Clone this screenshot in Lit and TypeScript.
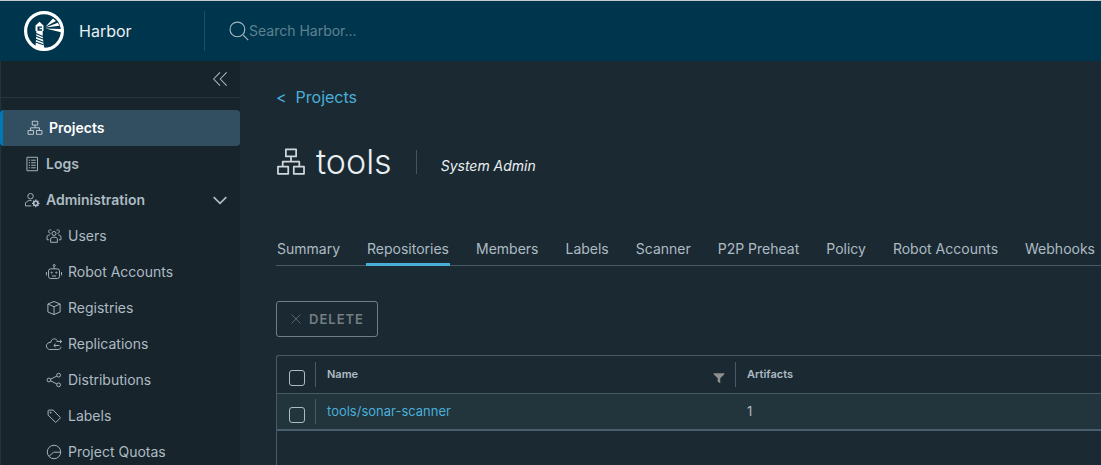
import { LitElement, html, css, svg, nothing } from "lit";
import { customElement, property, state } from "lit/decorators.js";

const icons: Record<string, unknown> = {
  organization: svg`<rect x="11.500" y="2" width="13" height="9"/><path d="M18 11v6M7.500 24v-6.500h21V24"/><rect x="1.500" y="24" width="13" height="9"/><rect x="21.500" y="24" width="13" height="9"/>`,
  list: svg`<rect x="6" y="2" width="25" height="32"/><path d="M10.500 9h3M16 9h11M10.500 15h3M16 15h11M10.500 21h3M16 21h11M10.500 27h3M16 27h11"/>`,
  admin: svg`<circle cx="14.500" cy="9" r="6.500"/><path d="M17 19.500c-6-1-11.500 1-14.500 5.500v7h14"/><circle cx="27" cy="26" r="5" stroke-width="4"/><path d="M27 17v4M27 31v4M18 26h4M32 26h4M20.700 19.700l2.800 2.800M30.500 29.500l2.800 2.800M33.300 19.700l-2.800 2.800M23.500 29.500l-2.800 2.800" stroke-width="3"/>`,
  users: svg`<circle cx="18" cy="12" r="4.800"/><path d="M10 33v-9c2-4.500 14-4.500 16 0v9z"/><path d="M12 4.500C9 1.500 4.500 4 5.500 8c.4 2.500 2.500 4 4.500 4M24 4.500c3-3 7.500-.5 6.500 3.500-.4 2.500-2.500 4-4.500 4M8 15.500c-3 0-5 1-6.500 3V27h4.500M28 15.500c3 0 5 1 6.500 3V27H30"/>`,
  robot: svg`<rect x="5" y="10.500" width="26" height="23" rx="5"/><circle cx="18.500" cy="2.500" r="2.300"/><path d="M18 5v5.500M0 18v8M36 18v8M13 27.500h10"/><circle cx="12.500" cy="19.500" r="1.400"/><circle cx="23.500" cy="19.500" r="1.400"/>`,
  block: svg`<path d="M18 2.500l14.500 6v19L18 33.500l-14.500-6v-19zM3.500 8.500L18 15l14.500-6.500M18 15v18.500"/>`,
  cloud: svg`<path d="M26 10C22 3 11 5 10.500 14 4 14 0 18 0 22.500S3.500 31 8 31h20c4 0 6.500-3 6.500-6.500"/><path d="M36 12H24M32 8l4.500 4-4.500 4M18 21.500h13M22 17.500l-4.500 4 4.500 4"/>`,
  share: svg`<circle cx="6" cy="18" r="4.500"/><circle cx="29" cy="6.500" r="4.500"/><circle cx="29" cy="29.500" r="4.500"/><path d="M10 16l15-7.500M10 20l15 7.500"/>`,
  tag: svg`<path d="M4 5.500C4 4.500 4.500 4 5.500 4H16l16.500 17c.7.700.7 1.500 0 2.200l-9.300 9.300c-.7.700-1.500.7-2.200 0L4 16z"/><circle cx="10" cy="10" r="1.300"/>`,
  quota: svg`<circle cx="18" cy="18" r="16"/><path d="M6 28.500l11-10h17"/>`,
  collapse: svg`<path d="M18 4L4.500 18 18 32M32 4L18.500 18 32 32"/>`,
  down: svg`<path d="M3 11l15 15 15-15"/>`,
  search: svg`<circle cx="15" cy="15" r="14"/><path d="M26 26l9.500 9.500"/>`,
  close: svg`<path d="M4 4l28 28M32 4L4 32"/>`,
  funnel: svg`<path d="M1 3h34v3L22 19v16l-8-5V19L1 6z" fill="currentColor" stroke="none"/>`,
};

@customElement("ui-icon")
export class UiIcon extends LitElement {
  @property() name = "";
  @property({ type: Number }) weight = 2.2;
  static styles = css`
    :host { display: inline-flex; flex: none; width: 16px; height: 16px; }
    svg { width: 100%; height: 100%; overflow: visible; }
  `;
  render() {
    return html`<svg viewBox="-1 -1 38 38" fill="none" stroke="currentColor" stroke-width=${this.weight} stroke-linejoin="round" aria-hidden="true">${icons[this.name]}</svg>`;
  }
}

@customElement("app-root")
export class AppRoot extends LitElement {
  @state() private adminOpen = true;
  @state() private tab = "Repositories";

  private adminItems = [
    ["users", "Users"],
    ["robot", "Robot Accounts"],
    ["block", "Registries"],
    ["cloud", "Replications"],
    ["share", "Distributions"],
    ["tag", "Labels"],
    ["quota", "Project Quotas"],
  ];
  private tabs = ["Summary", "Repositories", "Members", "Labels", "Scanner", "P2P Preheat", "Policy", "Robot Accounts", "Webhooks"];
  private rows = [{ name: "tools/sonar-scanner", artifacts: 1 }];

  static styles = css`
    :host {
      display: flex;
      flex-direction: column;
      height: 100vh;
      overflow: hidden;
      box-sizing: border-box;
      border-top: 1px solid #c4cccd;
      background: #1b2a32;
      color: #adbbc4;
      font: 14px/20px Inter, "Open Sans", sans-serif;
    }
    * { box-sizing: border-box; }
    button { font: inherit; color: inherit; background: none; border: 0; padding: 0; cursor: pointer; }
    a { color: inherit; text-decoration: none; }

    .header { display: flex; align-items: center; flex: none; height: 60px; background: #00364d; padding-left: 24px; }
    .brand { display: flex; align-items: center; gap: 15px; width: 180px; color: #fff; font-size: 16px; }
    .brand-name { color: #eaeff2; }
    .logo { width: 40px; height: 40px; }
    .search { display: flex; align-items: center; flex: 1; height: 40px; padding-left: 24px; border-left: 1px solid #1f4f63; color: #a3b7c0; }
    .search-icon { width: 20px; height: 20px; }
    .search-input { flex: 1; min-width: 0; background: none; border: 0; outline: 0; padding: 0; font: inherit; color: #fff; }
    .search-input::placeholder { color: #5f8190; opacity: 1; }

    .body { display: flex; flex: 1; min-height: 0; }
    .sidebar { flex: none; width: 240px; overflow-y: auto; scrollbar-width: none; background: #17242b; box-shadow: inset 1px 0 #25343c; }
    .collapse-row { display: flex; justify-content: flex-end; align-items: center; height: 37px; padding-right: 11px; margin-bottom: 12px; border-bottom: 1px solid #25343c; }
    .collapse { display: flex; }
    .collapse-icon { width: 18px; height: 18px; }
    .item { display: flex; align-items: center; width: 100%; height: 36px; gap: 6px; padding: 0 12px 0 24px; font-weight: 600; text-align: left; }
    .item.active { background: #324f62; color: #fff; border-left: 3px solid #0079b8; border-radius: 4px; }
    .item.child { padding-left: 46px; font-weight: 400; }
    .item-label { flex: 1; }
    .active ui-icon { color: #c5d0d6; }

    .main { display: flex; flex-direction: column; flex: 1; min-width: 0; padding: 26px 0 0 36px; overflow: hidden; }
    .crumb { display: flex; gap: 9px; align-self: flex-start; color: #49afd9; font-size: 16px; }
    .title { display: flex; align-items: center; height: 40px; margin-top: 35px; color: #eaeff2; }
    .title-icon { width: 30px; height: 30px; margin-right: 10px; color: #d0d8dc; }
    h1 { margin: 0; font-size: 34px; line-height: 40px; font-weight: 300; }
    .role { display: flex; align-items: center; height: 24px; margin-left: 24px; padding: 8px 0 0 24px; border-left: 1px solid #45545e; font-size: 14px; font-style: italic; }
    .tabs { display: flex; gap: 25px; height: 36px; flex: none; margin-top: 48px; box-shadow: inset 0 -1px #495865; }
    .tab { flex: none; height: 36px; padding: 5px 1px 0; white-space: nowrap; border-bottom: 3px solid transparent; }
    .tab.selected { border-bottom-color: #49afd9; }
    .delete { display: flex; align-items: center; justify-content: center; gap: 7px; flex: none; width: 102px; height: 36px; margin: 35px 0 18px; border: 1px solid #737d82; border-radius: 3px; color: #737d82; font-size: 13px; font-weight: 600; letter-spacing: 1px; }
    .delete-icon { width: 12px; height: 12px; }

    .grid { flex: 1; border: 1px solid #495a67; border-right: 0; border-bottom: 0; border-radius: 3px 0 0 0; }
    table { width: 100%; border-collapse: collapse; table-layout: fixed; }
    .col-check { width: 38px; }
    .col-name { width: 420px; }
    th, td { height: 37px; padding: 0; text-align: left; vertical-align: middle; font-weight: 400; }
    th { border-bottom: 1px solid #495a67; font-size: 11px; font-weight: 600; }
    td { background: #22343c; border-bottom: 2px solid #495f6e; font-size: 13px; }
    .cell { display: flex; align-items: center; justify-content: space-between; height: 25px; padding: 0 10px 0 11px; border-left: 1px solid transparent; }
    .divided { border-left-color: #495a67; }
    .check { display: flex; justify-content: center; padding: 7px 0 0 2px; }
    .checkbox { appearance: none; width: 16px; height: 16px; margin: 0; border: 1px solid #adbbc4; border-radius: 3px; }
    .checkbox:checked { background: #49afd9; }
    .link { color: #49afd9; }
    .filter { display: flex; padding-top: 7px; color: #8f8f8f; }
    .filter-icon { width: 12px; height: 12px; }
  `;

  private logo() {
    return html`<svg class="logo" viewBox="0 0 40 40" aria-hidden="true">
      <circle cx="20" cy="20" r="18.400" fill="none" stroke="#fff" stroke-width="3.200"/>
      <path d="M11.500 14.500l4-3.800 4 3.800v5.500h-.8v4l.8 9 1.500 6c-3.500.3-7-.8-9.500-3l.8-12v-4h-.8z" fill="#fff"/>
      <path d="M13.500 15.500h4.500v4.200h-4.500z" fill="#00364d"/><path d="M15.500 17.500h2.500" stroke="#fff" stroke-width="1.400"/>
      <path d="M12 22.500l7 3M12 25.300l7.500 3M11.700 28.200l8 3M11.500 31l8 2.800" stroke="#00364d" stroke-width="1.100"/>
      <path d="M21.500 15.800L29 7.500l3 2.500zM21.500 16.500l12.300-4.800 1.700 3zM21.500 17.500l15.500.5v3.300z" fill="#fff"/>
    </svg>`;
  }

  render() {
    return html`
      <header class="header">
        <a class="brand" href="#">${this.logo()}<span class="brand-name">Harbor</span></a>
        <label class="search">
          <ui-icon class="search-icon" name="search"></ui-icon>
          <input class="search-input" type="text" placeholder="Search Harbor..." aria-label="Search Harbor" />
        </label>
      </header>
      <div class="body">
        <nav class="sidebar">
          <div class="collapse-row">
            <button class="collapse" aria-label="Collapse navigation"><ui-icon class="collapse-icon" name="collapse"></ui-icon></button>
          </div>
          <a class="item active" href="#"><ui-icon name="organization"></ui-icon><span class="item-label">Projects</span></a>
          <a class="item" href="#"><ui-icon name="list"></ui-icon><span class="item-label">Logs</span></a>
          <button class="item" aria-expanded=${this.adminOpen} @click=${() => (this.adminOpen = !this.adminOpen)}>
            <ui-icon name="admin"></ui-icon><span class="item-label">Administration</span><ui-icon name="down" weight="4"></ui-icon>
          </button>
          ${this.adminOpen
            ? this.adminItems.map(([icon, label]) => html`<a class="item child" href="#"><ui-icon name=${icon}></ui-icon><span class="item-label">${label}</span></a>`)
            : nothing}
        </nav>
        <main class="main">
          <a class="crumb" href="#"><span>&lt;</span><span>Projects</span></a>
          <div class="title">
            <ui-icon class="title-icon" name="organization"></ui-icon>
            <h1>tools</h1>
            <span class="role">System Admin</span>
          </div>
          <div class="tabs" role="tablist">
            ${this.tabs.map((t) => html`<button role="tab" aria-selected=${t === this.tab} class="tab ${t === this.tab ? "selected" : ""}" @click=${() => (this.tab = t)}>${t}</button>`)}
          </div>
          <button class="delete" disabled><ui-icon class="delete-icon" name="close"></ui-icon><span>DELETE</span></button>
          <div class="grid">
            <table>
              <colgroup><col class="col-check" /><col class="col-name" /><col /></colgroup>
              <thead>
                <tr>
                  <th><div class="check"><input class="checkbox" type="checkbox" aria-label="Select all" /></div></th>
                  <th><div class="cell divided"><span>Name</span><button class="filter" aria-label="Filter by name"><ui-icon class="filter-icon" name="funnel"></ui-icon></button></div></th>
                  <th><div class="cell divided">Artifacts</div></th>
                </tr>
              </thead>
              <tbody>
                ${this.rows.map((r) => html`<tr>
                  <td><div class="check"><input class="checkbox" type="checkbox" aria-label="Select ${r.name}" /></div></td>
                  <td><div class="cell divided"><a class="link" href="#">${r.name}</a></div></td>
                  <td><div class="cell">${r.artifacts}</div></td>
                </tr>`)}
              </tbody>
            </table>
          </div>
        </main>
      </div>
    `;
  }
}
